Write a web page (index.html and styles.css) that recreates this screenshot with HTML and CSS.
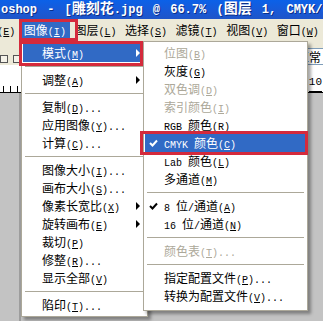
FILE: index.html
```html
<!DOCTYPE html>
<html lang="zh">
<head>
  <meta charset="UTF-8">
  <meta name="viewport" content="width=device-width, initial-scale=1.0">
  <title>图像 - 模式</title>
  <link rel="stylesheet" href="styles.css">
</head>
<body>

  <div class="window">
    <div class="titlebar">oshop - [<span class="cjk">雕刻花</span>.jpg @ 66.7% (<span class="cjk">图层</span> 1, CMYK/8)]</div>

    <div class="menubar">
      <span class="mbItem">编辑<span class="k">(<u>E</u>)</span></span>
      <span class="mbItem active">图像<span class="k">(<u>I</u>)</span></span>
      <span class="mbItem">图层<span class="k">(<u>L</u>)</span></span>
      <span class="mbItem">选择<span class="k">(<u>S</u>)</span></span>
      <span class="mbItem">滤镜<span class="k">(<u>T</u>)</span></span>
      <span class="mbItem">视图<span class="k">(<u>V</u>)</span></span>
      <span class="mbItem">窗口<span class="k">(<u>W</u>)</span></span>
    </div>

    <div class="optionsbar">
      <div class="tools">
        <span class="tool"></span>
        <span class="tool"></span>
      </div>
      <div class="combo">正常</div>
    </div>

    <div class="ruler">
      <span class="ticks"></span>
      <span class="rulerNum">10</span>
    </div>

    <div class="workspace"></div>
  </div>

  <!-- 图像 菜单 -->
  <ul class="menu menuMain">
    <li class="active sub">模式<span class="k">(<u>M</u>)</span></li>
    <li class="sep"></li>
    <li class="sub">调整<span class="k">(<u>A</u>)</span></li>
    <li class="sep"></li>
    <li>复制<span class="k">(<u>D</u>)...</span></li>
    <li>应用图像<span class="k">(<u>Y</u>)...</span></li>
    <li>计算<span class="k">(<u>C</u>)...</span></li>
    <li class="sep"></li>
    <li>图像大小<span class="k">(<u>I</u>)...</span></li>
    <li>画布大小<span class="k">(<u>S</u>)...</span></li>
    <li class="sub">像素长宽比<span class="k">(<u>X</u>)</span></li>
    <li class="sub">旋转画布<span class="k">(<u>E</u>)</span></li>
    <li>裁切<span class="k">(<u>P</u>)</span></li>
    <li>修整<span class="k">(<u>R</u>)...</span></li>
    <li>显示全部<span class="k">(<u>V</u>)</span></li>
    <li class="sep"></li>
    <li>陷印<span class="k">(<u>T</u>)...</span></li>
  </ul>

  <!-- 模式 子菜单 -->
  <ul class="menu menuSub">
    <li class="disabled">位图<span class="k">(<u>B</u>)</span></li>
    <li>灰度<span class="k">(<u>G</u>)</span></li>
    <li class="disabled">双色调<span class="k">(<u>D</u>)</span></li>
    <li class="disabled">索引颜色<span class="k">(<u>I</u>)</span></li>
    <li><span class="k">RGB </span>颜色<span class="k">(<u>R</u>)</span></li>
    <li class="active">
      <svg class="check" width="9" height="8" viewBox="0 0 9 8"><path d="M1 4 L3.5 6.5 L8 1.5" fill="none" stroke="currentColor" stroke-width="2"/></svg>
      <span class="k">CMYK </span>颜色<span class="k">(<u>C</u>)</span>
    </li>
    <li><span class="k">Lab </span>颜色<span class="k">(<u>L</u>)</span></li>
    <li>多通道<span class="k">(<u>M</u>)</span></li>
    <li class="sep"></li>
    <li>
      <svg class="check" width="9" height="8" viewBox="0 0 9 8"><path d="M1 4 L3.5 6.5 L8 1.5" fill="none" stroke="currentColor" stroke-width="2"/></svg>
      <span class="k">8 </span>位<span class="k">/</span>通道<span class="k">(<u>A</u>)</span>
    </li>
    <li><span class="k">16 </span>位<span class="k">/</span>通道<span class="k">(<u>N</u>)</span></li>
    <li class="sep"></li>
    <li class="disabled">颜色表<span class="k">(<u>T</u>)...</span></li>
    <li class="sep"></li>
    <li>指定配置文件<span class="k">(<u>P</u>)...</span></li>
    <li>转换为配置文件<span class="k">(<u>V</u>)...</span></li>
  </ul>

  <!-- 红色标注框 -->
  <div class="mark markImage"></div>
  <div class="mark markMode"></div>
  <div class="mark markCmyk"></div>

</body>
</html>
```

FILE: styles.css
```css
* { padding:0; margin:0; box-sizing:border-box; }
ul,li { list-style:none; }

:root {
  --color-xp-face: #ece9d8;
  --color-xp-blue: #316ac5;
  --color-border: #aca899;
  --color-disabled: #aca899;
  --color-workspace: #c3c3c3;
  --color-mark: #d42a3c;

  --item-height: 18px;
  --sep-height: 9px;
}

body {
  position: relative;
  width: 323px;
  height: 321px;
  overflow: hidden;
  background-color: var(--color-workspace);
  font-family: "Noto Sans CJK SC", sans-serif;
  font-size: 12px;
  color: #000;
}

/* 半角字符: 括号、字母、省略号 */
.k {
  font-family: "Liberation Mono", monospace;
  font-size: 10px;
}

.window {
  display: flex;
  flex-direction: column;
  height: 321px;
}

/* title bar */
.titlebar {
  height: 19px;
  line-height: 19px;
  padding-left: 1px;
  background: linear-gradient(#0b61e8, #1959d6 60%, #1f55c8);
  color: #fff;
  font-family: "Liberation Mono", "Noto Sans CJK SC", monospace;
  font-weight: bold;
  white-space: nowrap;
  overflow: hidden;
  word-spacing: 3px;
  text-shadow: 1px 1px 0 #0c2f87;
}

.titlebar .cjk {
  font-size: 14px;
}

/* menu bar */
.menubar {
  height: 21px;
  margin-left: -31px;
  background-color: var(--color-xp-face);
  display: flex;
  align-items: center;
  white-space: nowrap;
}

.mbItem {
  width: 53px;
  height: 16px;
  line-height: 16px;
  text-align: center;
}

.mbItem.active {
  background-color: var(--color-xp-blue);
  color: #fff;
}

/* options bar */
.optionsbar {
  height: 25px;
  background-color: var(--color-xp-face);
  display: flex;
  justify-content: space-between;
  align-items: flex-end;
}

.tools {
  display: flex;
  gap: 5px;
  padding-bottom: 2px;
}

.tool {
  width: 8px;
  height: 8px;
  border: 1px solid #555;
  background-color: #f4f2e8;
}

.combo {
  width: 40px;
  height: 17px;
  line-height: 15px;
  margin-right: -12px;
  padding-left: 1px;
  border: 1px solid #7f9db9;
  background-color: #fff;
}

/* ruler */
.ruler {
  height: 28px;
  background-color: #fff;
  border-bottom: 1px solid #000;
  display: flex;
  justify-content: space-between;
  align-items: flex-end;
}

.ticks {
  width: 22px;
  height: 6px;
  margin-left: 3px;
  background: repeating-linear-gradient(90deg, #000 0 1px, transparent 1px 7px);
}

.rulerNum {
  margin-right: 1px;
  padding-bottom: 3px;
  font-family: "Liberation Mono", monospace;
  font-size: 11px;
  line-height: 12px;
  border-bottom: 1px solid #000;
}

.workspace {
  flex: 1;
  background: linear-gradient(90deg, var(--color-workspace) 0 19px, #9d9d9d 19px 21px, var(--color-workspace) 21px);
}

/* drop-down menus */
.menu {
  position: absolute;
  top: 41px;
  background-color: #fff;
  border: 1px solid var(--color-border);
  box-shadow: 3px 3px 3px rgba(0, 0, 0, 0.35);
  padding: 2px 1px;
}

.menuMain {
  left: 21px;
  width: 127px;
}

.menuSub {
  left: 143px;
  width: 165px;
  padding-bottom: 5px;
}

.menu li {
  position: relative;
  height: var(--item-height);
  line-height: var(--item-height);
  padding-left: 19px;
  white-space: nowrap;
}

.menu li.sep {
  height: var(--sep-height);
  margin: 0 2px;
  padding: 0;
}

.menu li.sep::after {
  content: "";
  position: absolute;
  left: 0;
  right: 0;
  top: 4px;
  height: 1px;
  background-color: var(--color-border);
}

.menu li.active {
  background-color: var(--color-xp-blue);
  color: #fff;
}

.menu li.disabled {
  color: var(--color-disabled);
}

.menu li.sub::after {
  content: "";
  position: absolute;
  right: 6px;
  top: 5px;
  border-left: 4px solid currentColor;
  border-top: 4px solid transparent;
  border-bottom: 4px solid transparent;
}

.check {
  position: absolute;
  left: 4px;
  top: 5px;
}

/* red annotation boxes */
.mark {
  position: absolute;
  border: 3px solid var(--color-mark);
}

.markImage {
  left: 19px;
  top: 19px;
  width: 59px;
  height: 22px;
}

.markMode {
  left: 19px;
  top: 41px;
  width: 124px;
  height: 25px;
}

.markCmyk {
  left: 140px;
  top: 131px;
  width: 168px;
  height: 24px;
}
```
